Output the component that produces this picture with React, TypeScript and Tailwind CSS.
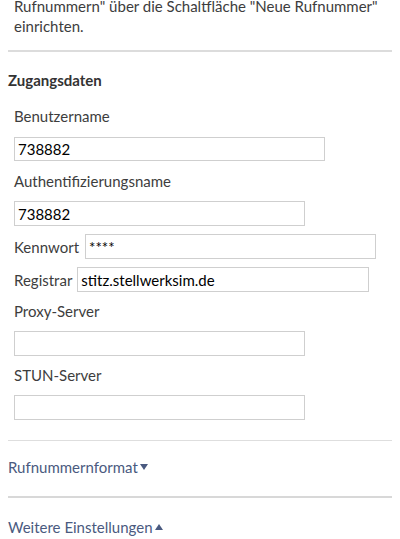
function Caret({ up }: { up?: boolean }) {
  return (
    <svg width="8" height="6" viewBox="0 0 8 6" className="fill-current">
      {up ? <path d="M0 6 L4 0 L8 6 Z" /> : <path d="M0 0 L8 0 L4 6 Z" />}
    </svg>
  )
}

export default function App() {
  return (
    <div className="h-[539px] overflow-hidden bg-white px-2 font-['Lato',sans-serif] text-[15px] leading-[20px] text-[#3d3d3d]">
      <div className="pl-[6px]">
        <div className="leading-[12px]">Rufnummern" über die Schaltfläche "Neue Rufnummer"</div>
        <div className="mt-[4px]">einrichten.</div>
      </div>
      <div className="mt-[14px] border-t-2 border-[#dcdcdc]" />

      <h3 className="mt-[18px] font-bold text-[#333]">Zugangsdaten</h3>

      <div className="pl-[6px]">
        <div className="mt-[16px]">Benutzername</div>
        <input
          readOnly
          value="738882"
          className="mt-[11px] block h-[24px] w-[311px] border border-[#cfcfcf] px-[3px] text-black outline-none"
        />

        <div className="mt-[10px]">Authentifizierungsname</div>
        <input
          readOnly
          value="738882"
          className="mt-[10px] block h-[25px] w-[291px] border border-[#cfcfcf] px-[3px] text-black outline-none"
        />

        <div className="mt-[8px] flex items-center gap-[6px]">
          <span>Kennwort</span>
          <input
            readOnly
            value="****"
            className="h-[25px] w-[291px] border border-[#cfcfcf] px-[3px] text-black outline-none"
          />
        </div>

        <div className="mt-[8px] flex items-center gap-[5px]">
          <span>Registrar</span>
          <input
            readOnly
            value="stitz.stellwerksim.de"
            className="h-[25px] w-[292px] border border-[#cfcfcf] px-[3px] text-black outline-none"
          />
        </div>

        <div className="mt-[9px]">Proxy-Server</div>
        <input readOnly className="mt-[10px] block h-[25px] w-[291px] border border-[#cfcfcf] outline-none" />

        <div className="mt-[9px]">STUN-Server</div>
        <input readOnly className="mt-[10px] block h-[25px] w-[291px] border border-[#cfcfcf] outline-none" />
      </div>

      <div className="mt-[20px] border-t border-[#dedede]" />
      <button className="mt-[16px] flex items-center gap-[2px] text-[#4a5a80]">
        Rufnummernformat
        <Caret />
      </button>

      <div className="mt-[19px] border-t-2 border-[#d8d8d8]" />
      <button className="mt-[19px] flex items-center gap-[2px] text-[#4a5a80]">
        Weitere Einstellungen
        <Caret up />
      </button>
    </div>
  )
}
